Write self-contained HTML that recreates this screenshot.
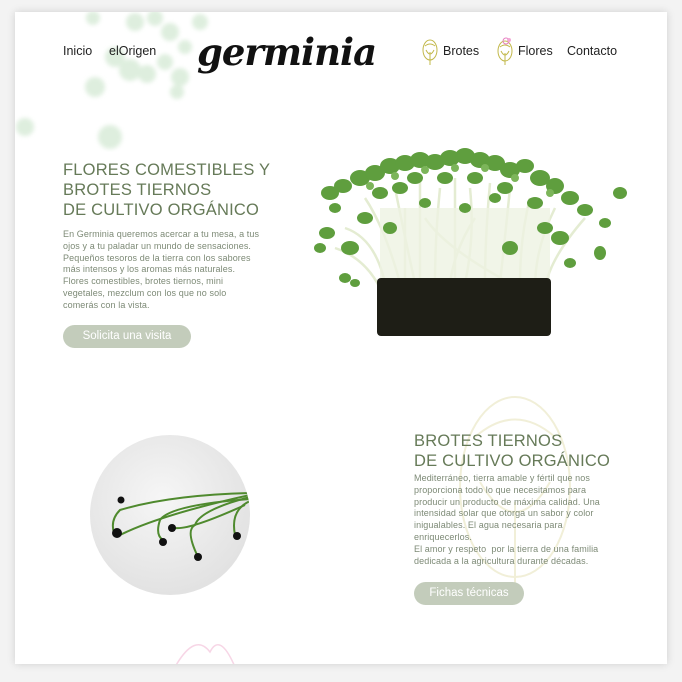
<!DOCTYPE html>
<html><head><meta charset="utf-8"><style>
*{margin:0;padding:0;box-sizing:border-box}
body{width:682px;height:682px;background:#f3f3f3;font-family:"Liberation Sans",sans-serif;position:relative;overflow:hidden}
.card{position:absolute;left:15px;top:12px;width:652px;height:652px;background:#fff;box-shadow:0 0 8px rgba(0,0,0,.15);overflow:hidden}
.abs{position:absolute}
.nav{font-size:12.5px;color:#222;top:32px}
h2{position:absolute;font-weight:normal;color:#667a58;font-size:16.5px;line-height:20px;letter-spacing:.2px}
p.t{position:absolute;color:#7d8a76;font-size:9px;line-height:11.8px;white-space:nowrap;letter-spacing:.1px}
.btn{position:absolute;background:#c3ccbb;color:#fff;border-radius:12px;height:23px;font-size:11.5px;line-height:23px;text-align:center}
.logo{font-family:"DejaVu Serif",serif;font-style:italic;font-weight:bold;font-size:37px;color:#111;letter-spacing:-1px}
</style></head><body>
<div class="card">
<svg class="abs" style="left:0;top:0" width="200" height="140">
<defs><filter id="b"><feGaussianBlur stdDeviation="2"/></filter></defs>
<g fill="#d6ead6" filter="url(#b)" opacity=".8">
<circle cx="78" cy="6" r="7"/><circle cx="120" cy="10" r="9"/><circle cx="140" cy="6" r="8"/><circle cx="155" cy="20" r="9"/>
<circle cx="100" cy="45" r="10"/><circle cx="115" cy="58" r="11"/><circle cx="132" cy="62" r="9"/><circle cx="150" cy="50" r="8"/><circle cx="165" cy="65" r="9"/>
<circle cx="162" cy="80" r="7"/><circle cx="80" cy="75" r="10"/><circle cx="95" cy="125" r="12"/><circle cx="10" cy="115" r="9"/>
<circle cx="185" cy="10" r="8"/><circle cx="170" cy="35" r="7"/></g></svg>
<div class="abs nav" style="left:48px">Inicio</div>
<div class="abs nav" style="left:94px">elOrigen</div>
<div class="abs logo" style="left:182px;top:18px">germinia</div>
<svg class="abs" style="left:405px;top:26px" width="20" height="28"><g fill="none" stroke="#c2b84a" stroke-width="1"><ellipse cx="10" cy="12" rx="7" ry="10"/><path d="M5 8 Q10 4 15 8 M6 12 Q10 20 14 12 M10 14 V27"/></g></svg>
<div class="abs nav" style="left:428px">Brotes</div>
<svg class="abs" style="left:480px;top:24px" width="20" height="30"><g fill="none" stroke="#c2b84a" stroke-width="1"><ellipse cx="10" cy="15" rx="7" ry="10"/><path d="M5 11 Q10 7 15 11 M6 15 Q10 23 14 15 M10 17 V29"/></g><circle cx="11" cy="5" r="3" fill="none" stroke="#e57fc0"/><circle cx="14" cy="4" r="2" fill="#f3a8d6"/></svg>
<div class="abs nav" style="left:503px">Flores</div>
<div class="abs nav" style="left:552px">Contacto</div>

<h2 style="left:48px;top:148px">FLORES COMESTIBLES Y<br>BROTES TIERNOS<br>DE CULTIVO ORGÁNICO</h2>
<p class="t" style="left:48px;top:217px">En Germinia queremos acercar a tu mesa, a tus<br>ojos y a tu paladar un mundo de sensaciones.<br>Pequeños tesoros de la tierra con los sabores<br>más intensos y los aromas más naturales.<br>Flores comestibles, brotes tiernos, mini<br>vegetales, mezclum con los que no solo<br>comerás con la vista.</p>
<div class="btn" style="left:48px;top:313px;width:128px">Solicita una visita</div>

<svg class="abs" style="left:290px;top:136px" width="330" height="200">
<g stroke="#e4ecd2" stroke-width="2.5" fill="none">
<path d="M40 80 Q70 90 80 135"/><path d="M60 50 Q80 80 95 135"/><path d="M90 40 Q100 90 110 135"/><path d="M115 30 V135"/><path d="M135 40 Q130 90 130 135"/><path d="M150 30 V135"/><path d="M165 40 Q170 90 160 135"/><path d="M185 35 Q180 90 180 135"/><path d="M205 40 Q200 90 195 135"/><path d="M225 50 Q215 90 215 135"/><path d="M250 60 Q230 100 230 140"/><path d="M280 70 Q245 110 240 140"/><path d="M100 60 V135"/><path d="M170 70 Q150 100 145 135"/><path d="M120 70 Q140 100 205 135"/><path d="M30 100 Q60 110 75 140"/>
</g>
<rect x="75" y="60" width="170" height="75" fill="#eef3e2" opacity=".8"/>
<rect x="72" y="130" width="174" height="58" rx="4" fill="#1e1e16"/>
<g fill="#5f9e3e">
<ellipse cx="25" cy="45" rx="9" ry="7"/><ellipse cx="38" cy="38" rx="9" ry="7"/><ellipse cx="22" cy="85" rx="8" ry="6"/><ellipse cx="15" cy="100" rx="6" ry="5"/><ellipse cx="45" cy="100" rx="9" ry="7"/><ellipse cx="40" cy="130" rx="6" ry="5"/>
<ellipse cx="55" cy="30" rx="10" ry="8"/><ellipse cx="70" cy="25" rx="10" ry="8"/><ellipse cx="85" cy="18" rx="10" ry="8"/><ellipse cx="100" cy="15" rx="10" ry="8"/><ellipse cx="115" cy="12" rx="10" ry="8"/><ellipse cx="130" cy="14" rx="10" ry="8"/><ellipse cx="145" cy="10" rx="10" ry="8"/><ellipse cx="160" cy="8" rx="10" ry="8"/><ellipse cx="175" cy="12" rx="10" ry="8"/><ellipse cx="190" cy="15" rx="10" ry="8"/><ellipse cx="205" cy="22" rx="10" ry="8"/><ellipse cx="220" cy="18" rx="9" ry="7"/><ellipse cx="235" cy="30" rx="10" ry="8"/><ellipse cx="250" cy="38" rx="9" ry="8"/><ellipse cx="265" cy="50" rx="9" ry="7"/><ellipse cx="280" cy="62" rx="8" ry="6"/><ellipse cx="300" cy="75" rx="6" ry="5"/><ellipse cx="315" cy="45" rx="7" ry="6"/><ellipse cx="295" cy="105" rx="6" ry="7"/><ellipse cx="255" cy="90" rx="9" ry="7"/><ellipse cx="265" cy="115" rx="6" ry="5"/>
<ellipse cx="75" cy="45" rx="8" ry="6"/><ellipse cx="95" cy="40" rx="8" ry="6"/><ellipse cx="110" cy="30" rx="8" ry="6"/><ellipse cx="140" cy="30" rx="8" ry="6"/><ellipse cx="170" cy="30" rx="8" ry="6"/><ellipse cx="200" cy="40" rx="8" ry="6"/><ellipse cx="230" cy="55" rx="8" ry="6"/><ellipse cx="205" cy="100" rx="8" ry="7"/><ellipse cx="60" cy="70" rx="8" ry="6"/><ellipse cx="85" cy="80" rx="7" ry="6"/><ellipse cx="160" cy="60" rx="6" ry="5"/><ellipse cx="240" cy="80" rx="8" ry="6"/><ellipse cx="30" cy="60" rx="6" ry="5"/><ellipse cx="120" cy="55" rx="6" ry="5"/><ellipse cx="190" cy="50" rx="6" ry="5"/><ellipse cx="50" cy="135" rx="5" ry="4"/>
</g>
<g fill="#7cb55a"><circle cx="120" cy="22" r="4"/><circle cx="180" cy="20" r="4"/><circle cx="65" cy="38" r="4"/><circle cx="245" cy="45" r="4"/><circle cx="150" cy="20" r="4"/><circle cx="210" cy="30" r="4"/><circle cx="90" cy="28" r="4"/></g>
</svg>

<svg class="abs" style="left:440px;top:380px" width="120" height="210"><g fill="none" stroke="#f1efd8" stroke-width="2"><ellipse cx="60" cy="95" rx="55" ry="90"/><path d="M20 45 Q60 10 100 45 M25 90 Q60 150 95 90 M60 110 V205"/></g></svg>
<h2 style="left:399px;top:419px">BROTES TIERNOS<br>DE CULTIVO ORGÁNICO</h2>
<p class="t" style="left:399px;top:461px">Mediterráneo, tierra amable y fértil que nos<br>proporciona todo lo que necesitamos para<br>producir un producto de máxima calidad. Una<br>intensidad solar que otorga un sabor y color<br>inigualables. El agua necesaria para<br>enriquecerlos.<br>El amor y respeto &nbsp;por la tierra de una familia<br>dedicada a la agricultura durante décadas.</p>
<div class="btn" style="left:399px;top:570px;width:110px">Fichas técnicas</div>

<svg class="abs" style="left:75px;top:423px" width="160" height="160">
<defs><radialGradient id="g" cx=".45" cy=".4" r=".6"><stop offset="0" stop-color="#f6f6f6"/><stop offset="1" stop-color="#e2e2e2"/></radialGradient><clipPath id="c"><circle cx="80" cy="80" r="80"/></clipPath></defs>
<circle cx="80" cy="80" r="80" fill="url(#g)"/>
<g clip-path="url(#c)">
<g stroke="#4f8a2e" stroke-width="2" fill="none">
<path d="M160 58 Q80 60 30 75 Q20 85 24 98"/><path d="M160 60 Q70 80 30 100"/><path d="M160 62 Q110 75 105 90 Q95 95 108 122"/><path d="M160 64 Q80 70 70 85 Q65 100 73 105"/><path d="M160 66 Q140 75 145 100"/><path d="M155 70 Q100 95 85 93"/>
</g>
<g fill="#111"><circle cx="31" cy="65" r="3.5"/><circle cx="27" cy="98" r="5"/><circle cx="73" cy="107" r="4"/><circle cx="108" cy="122" r="4"/><circle cx="82" cy="93" r="4"/><circle cx="147" cy="101" r="4"/></g></g>
</svg>
<svg class="abs" style="left:150px;top:615px" width="80" height="40"><g fill="none" stroke="#f7d6e6" stroke-width="1.5"><path d="M10 40 Q30 5 45 25 Q55 5 70 40"/></g></svg>
</div>
</body></html>
